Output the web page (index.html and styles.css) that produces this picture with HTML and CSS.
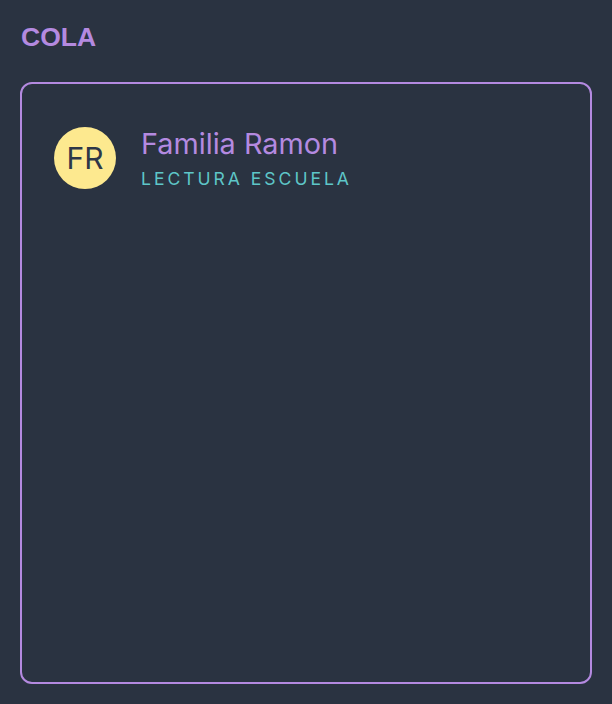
FILE: index.html
```html
<!DOCTYPE html>
<html lang="es">
<head>
    <meta charset="UTF-8">
    <meta name="viewport" content="width=device-width, initial-scale=1.0">
    <title>Cola</title>
    <link rel="stylesheet" href="styles.css">
</head>
<body>
    <div class="page">
        <h1 class="title">COLA</h1>

        <div class="queue">
            <div class="queue-item">
                <div class="avatar">FR</div>
                <div class="info">
                    <div class="name">Familia Ramon</div>
                    <div class="tag">Lectura Escuela</div>
                </div>
            </div>
        </div>
    </div>
</body>
</html>
```

FILE: styles.css
```css
/* Queue panel */
html, body {
    margin: 0;
    padding: 0;
}
body {
    background-color: #2a3341;
    font-family: Inter, 'Noto Sans', sans-serif;
    color: #e2e8f0;
}
.page {
    box-sizing: border-box;
    min-height: 100vh;
    padding: 22px 20px 20px;
    display: flex;
    flex-direction: column;
}
.title {
    font-family: 'Liberation Sans', Arial, sans-serif;
    font-weight: 700;
    font-size: 26.5px;
    line-height: 30px;
    color: #b48ae0;
    margin: 0 0 30px 1px;
}
.queue {
    flex: 1;
    border: 2px solid #b48ae0;
    border-radius: 12px;
    padding: 42px 32px;
}
.queue-item {
    display: flex;
    align-items: center;
    gap: 25px;
}
.avatar {
    width: 62px;
    height: 62px;
    border-radius: 50%;
    background-color: #fde98f;
    color: #2d3748;
    font-size: 30px;
    display: flex;
    align-items: center;
    justify-content: center;
    flex-shrink: 0;
}
.name {
    font-size: 28.8px;
    line-height: 36px;
    color: #b48ae0;
}
.tag {
    margin-top: 6px;
    font-size: 17.6px;
    line-height: 22px;
    letter-spacing: 2.95px;
    text-transform: uppercase;
    color: #5ec6c8;
}
```
